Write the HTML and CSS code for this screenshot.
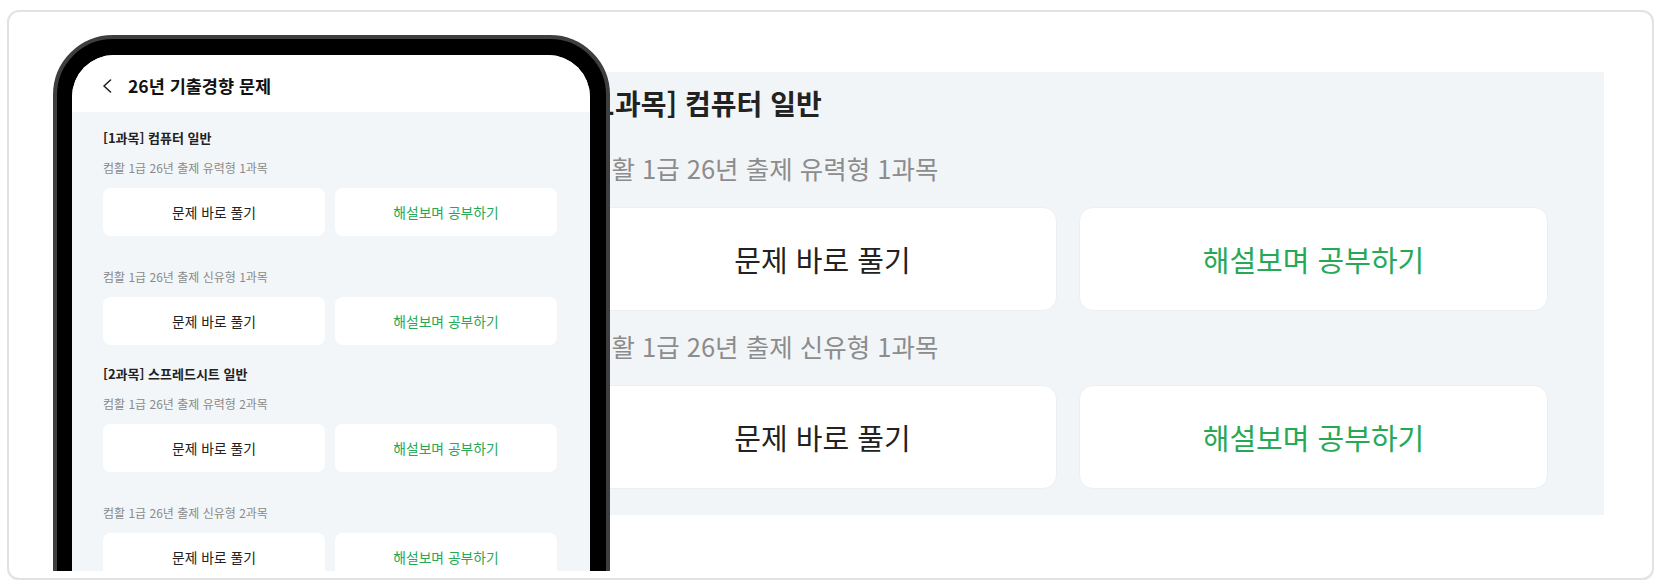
FILE: index.html
```html
<!DOCTYPE html>
<html lang="ko">
<head>
<meta charset="utf-8">
<title>26년 기출경향 문제</title>
<link rel="stylesheet" href="styles.css">
</head>
<body>
<div class="card">
  <div class="stage">
    <div class="phone">
      <div class="screen">
        <div class="app-header">
          <svg class="back" width="10" height="14" viewBox="0 0 10 14"><polyline points="8.5,1 2,7 8.5,13" fill="none" stroke="#222" stroke-width="1.6" stroke-linecap="round" stroke-linejoin="round"/></svg>
          <span class="app-title">26년 기출경향 문제</span>
        </div>
        <div class="app-body">
          <section class="subject">
            <h2 class="subject-title">[1과목] 컴퓨터 일반</h2>
            <div class="item">
              <p class="item-label">컴활 1급 26년 출제 유력형 1과목</p>
              <div class="btn-row"><div class="btn">문제 바로 풀기</div><div class="btn btn-green">해설보며 공부하기</div></div>
            </div>
            <div class="item">
              <p class="item-label">컴활 1급 26년 출제 신유형 1과목</p>
              <div class="btn-row"><div class="btn">문제 바로 풀기</div><div class="btn btn-green">해설보며 공부하기</div></div>
            </div>
          </section>
          <section class="subject">
            <h2 class="subject-title">[2과목] 스프레드시트 일반</h2>
            <div class="item">
              <p class="item-label">컴활 1급 26년 출제 유력형 2과목</p>
              <div class="btn-row"><div class="btn">문제 바로 풀기</div><div class="btn btn-green">해설보며 공부하기</div></div>
            </div>
            <div class="item">
              <p class="item-label">컴활 1급 26년 출제 신유형 2과목</p>
              <div class="btn-row"><div class="btn">문제 바로 풀기</div><div class="btn btn-green">해설보며 공부하기</div></div>
            </div>
          </section>
        </div>
      </div>
    </div>
    <div class="zoom-panel">
      <h2 class="zp-title">[1과목] 컴퓨터 일반</h2>
      <div class="zp-item">
        <p class="zp-label">컴활 1급 26년 출제 유력형 1과목</p>
        <div class="zp-row"><div class="zp-btn">문제 바로 풀기</div><div class="zp-btn zp-green">해설보며 공부하기</div></div>
      </div>
      <div class="zp-item">
        <p class="zp-label">컴활 1급 26년 출제 신유형 1과목</p>
        <div class="zp-row"><div class="zp-btn">문제 바로 풀기</div><div class="zp-btn zp-green">해설보며 공부하기</div></div>
      </div>
    </div>
  </div>
</div>
</body>
</html>
```
FILE: styles.css
```css
* { box-sizing: border-box; margin: 0; padding: 0; }
body {
  margin: 0;
  padding: 10px 7px 0;
  background: #fff;
  font-family: "Noto Sans CJK KR", "Noto Sans", sans-serif;
}
.card {
  width: 1647px;
  height: 570px;
  border: 2px solid #e2e2e2;
  border-radius: 12px;
  background: #fff;
  box-shadow: 0 1px 1px rgba(0,0,0,0.05);
}
.stage {
  height: 559px;
  overflow: hidden;
  display: flex;
  align-items: flex-start;
  border-radius: 10px 10px 0 0;
}
.phone {
  position: relative;
  z-index: 2;
  flex: none;
  width: 557px;
  height: 640px;
  margin: 23px 0 0 44px;
  background: #000;
  border: 4px solid #3e3e3e;
  border-radius: 60px;
  padding: 16px 16px 0 15px;
}
.screen {
  width: 518px;
  height: 100%;
  border-radius: 42px 42px 0 0;
  overflow: hidden;
  background: #f3f6f9;
}
.app-header {
  height: 57px;
  background: #fff;
  display: flex;
  align-items: center;
  gap: 16px;
  padding: 5px 0 0 30px;
}
.back { flex: none; display: block; }
.app-title {
  font-size: 17.5px;
  font-weight: 700;
  color: #111;
  line-height: 22px;
}
.app-body {
  padding: 16px 33px 0 31px;
}
.subject + .subject { margin-top: 19px; }
.subject-title {
  font-size: 13px;
  font-weight: 700;
  color: #222;
  line-height: 20px;
  margin-bottom: 10px;
}
.item + .item { margin-top: 31px; }
.item-label {
  font-size: 12px;
  color: #8a8a8a;
  line-height: 20px;
  margin-bottom: 10px;
}
.btn-row {
  display: flex;
  gap: 10px;
}
.btn {
  flex: 1;
  height: 48px;
  background: #fff;
  border-radius: 8px;
  display: flex;
  align-items: center;
  justify-content: center;
  font-size: 13.8px;
  font-weight: 400;
  color: #222;
}
.btn-green { color: #25a955; }

.zoom-panel {
  flex: none;
  width: 1056px;
  margin: 60px 0 0 -62px;
  background: #f2f5f8;
  padding: 11px 56px 26px 40px;
}
.zp-title {
  font-size: 28px;
  font-weight: 700;
  color: #222;
  line-height: 40px;
  margin-bottom: 27px;
}
.zp-item + .zp-item { margin-top: 17px; }
.zp-label {
  font-size: 25.5px;
  color: #8c8c8c;
  line-height: 36px;
  margin-bottom: 21px;
}
.zp-row {
  display: flex;
  gap: 22px;
}
.zp-btn {
  flex: 1;
  height: 104px;
  background: #fff;
  border: 1px solid #eceff2;
  border-radius: 14px;
  display: flex;
  align-items: center;
  justify-content: center;
  font-size: 29px;
  font-weight: 400;
  color: #222;
}
.zp-green { color: #25a955; }
```
